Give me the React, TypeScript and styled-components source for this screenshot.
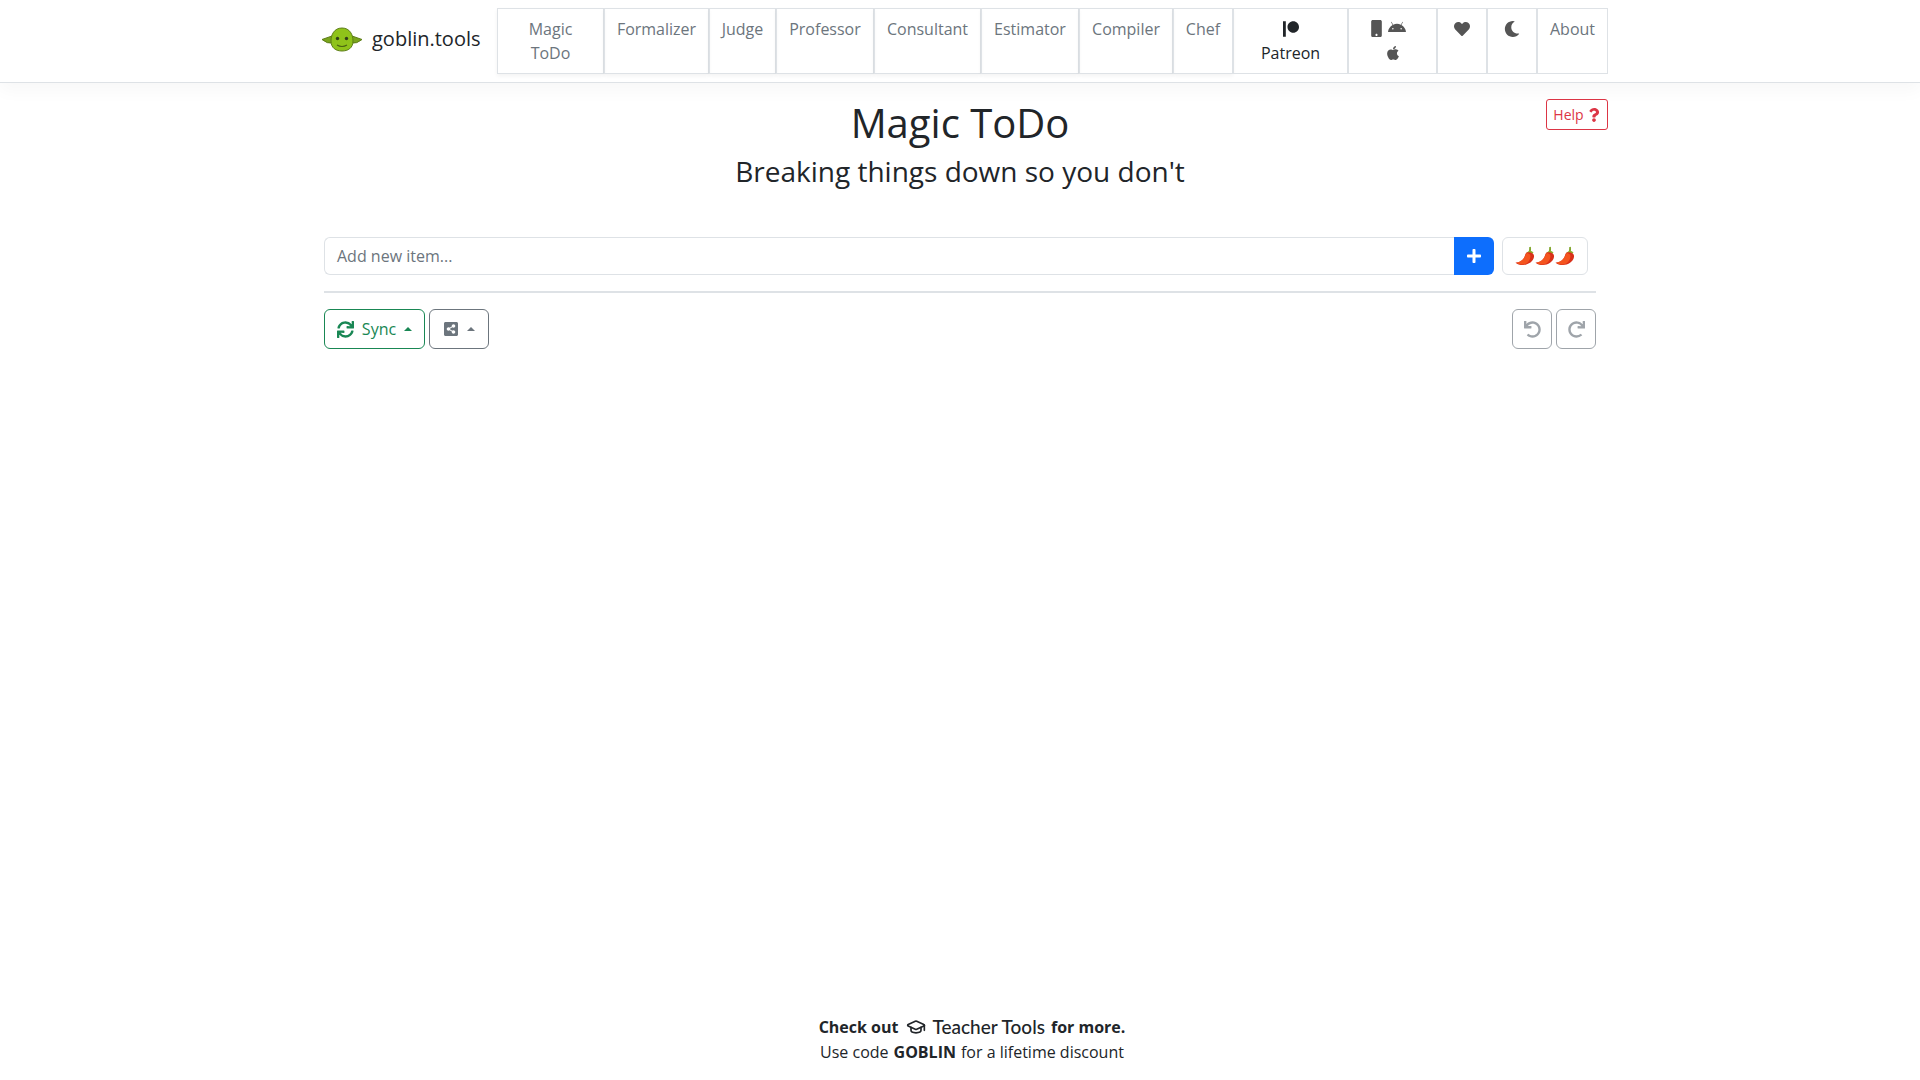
import React from 'react';
import styled, { createGlobalStyle } from 'styled-components';
import {
  FaAndroid,
  FaApple,
  FaHeart,
  FaMobile,
  FaMoon,
  FaPatreon,
  FaPlus,
  FaQuestion,
  FaRedo,
  FaShareAltSquare,
  FaSync,
  FaUndo,
} from 'react-icons/fa';
import { LuGraduationCap } from 'react-icons/lu';

const GlobalStyle = createGlobalStyle`
  html, body {
    margin: 0;
    padding: 0;
    background: #fff;
  }
  body {
    font-family: "Open Sans", "Liberation Sans", sans-serif;
    font-size: 16px;
    line-height: 24px;
    color: #212529;
  }
  * {
    box-sizing: border-box;
  }
`;

const Page = styled.div`
  height: 1080px;
  display: flex;
  flex-direction: column;
  overflow: hidden;
`;

const Navbar = styled.nav`
  height: 83px;
  flex: none;
  border-bottom: 1px solid #dee2e6;
  box-shadow: 0 8px 16px rgba(0, 0, 0, 0.03);
  display: flex;
  justify-content: center;
  padding-top: 8px;
`;

const NavInner = styled.div`
  width: 1296px;
  display: flex;
  justify-content: space-between;
  align-items: flex-start;
`;

const Brand = styled.a`
  display: flex;
  align-items: center;
  gap: 9px;
  height: 62px;
  margin-left: 9px;
  font-size: 20px;
  color: #212529;
`;

const NavList = styled.ul`
  display: flex;
  list-style: none;
  margin: 0;
  padding: 0;
  height: 66px;
`;

const NavItem = styled.li<{ $w: number; $flat?: boolean; $dark?: boolean }>`
  width: ${(p) => p.$w}px;
  border: 1px solid #dee2e6;
  padding: 8px 4px;
  text-align: center;
  color: ${(p) => (p.$dark ? '#212529' : '#6c757d')};
  box-shadow: ${(p) => (p.$flat ? 'none' : '0 2px 4px rgba(0, 0, 0, 0.05)')};
  white-space: nowrap;
  svg {
    vertical-align: -2px;
  }
`;

const DarkIcons = styled.span`
  color: #555;
  svg + svg {
    margin-left: 3px;
    margin-right: 11px;
  }
`;

const Main = styled.main`
  width: 1296px;
  margin: 0 auto;
  flex: 1;
  display: flex;
  flex-direction: column;
`;

const TitleRow = styled.div`
  display: grid;
  grid-template-columns: 1fr auto 1fr;
  padding-top: 16px;
  height: 71px;
  align-items: start;
`;

const Title = styled.h1`
  grid-column: 2;
  margin: 0;
  font-size: 40px;
  line-height: 48px;
  font-weight: 400;
`;

const HelpButton = styled.button`
  grid-column: 3;
  justify-self: end;
  height: 31px;
  width: 62px;
  padding: 0;
  font: inherit;
  font-size: 14px;
  line-height: 21px;
  color: #dc3545;
  background: #fff;
  border: 1px solid #dc3545;
  border-radius: 3px;
  display: flex;
  align-items: center;
  justify-content: center;
  gap: 3px;
`;

const Subtitle = styled.h3`
  margin: 0;
  text-align: center;
  font-size: 28px;
  line-height: 34px;
  font-weight: 400;
`;

const Content = styled.div`
  padding: 0 12px;
`;

const InputRow = styled.div`
  display: flex;
  margin-top: 49px;
  padding-right: 8px;
`;

const TextField = styled.div`
  flex: 1;
  height: 38px;
  border: 1px solid #dee2e6;
  border-right: 0;
  border-radius: 6px 0 0 6px;
  padding: 6px 12px;
  color: #6c757d;
`;

const AddButton = styled.button`
  width: 40px;
  height: 38px;
  border: 0;
  border-radius: 0 6px 6px 0;
  background: #0d6efd;
  color: #fff;
  display: flex;
  align-items: center;
  justify-content: center;
`;

const SpiceButton = styled.button`
  width: 86px;
  height: 38px;
  margin-left: 8px;
  background: #fff;
  border: 1px solid #dee2e6;
  border-radius: 6px;
  display: flex;
  align-items: center;
  justify-content: center;
  padding: 0;
`;

const Rule = styled.hr`
  margin: 16px 0;
  border: 0;
  border-top: 2px solid #dee2e6;
`;

const Toolbar = styled.div`
  display: flex;
  gap: 4px;
`;

const ToolButton = styled.button<{ $color: string; $w: number; $disabled?: boolean }>`
  width: ${(p) => p.$w}px;
  height: 40px;
  padding: 0;
  font: inherit;
  color: ${(p) => p.$color};
  background: #fff;
  border: 1px solid ${(p) => p.$color};
  border-radius: 6px;
  display: flex;
  align-items: center;
  justify-content: center;
  opacity: ${(p) => (p.$disabled ? 0.65 : 1)};
`;

const Spacer = styled.div`
  flex: 1;
`;

const Caret = styled.span`
  width: 0;
  height: 0;
  margin-left: 8px;
  border-left: 4.8px solid transparent;
  border-right: 4.8px solid transparent;
  border-bottom: 4.8px solid currentColor;
`;

const SyncLabel = styled.span`
  margin-left: 8px;
`;

const Footer = styled.footer`
  flex: none;
  height: 66px;
  padding-left: 24px;
  text-align: center;
`;

const FooterLine = styled.div<{ $bold?: boolean }>`
  display: flex;
  align-items: center;
  justify-content: center;
  height: 25px;
  font-weight: ${(p) => (p.$bold ? 700 : 400)};
  b {
    font-weight: 700;
    margin: 0 5px;
  }
`;

const TeacherLink = styled.span`
  display: inline-flex;
  align-items: center;
  gap: 6px;
  margin: 0 6px 0 8px;
  font-family: "Lato", sans-serif;
  font-size: 19px;
  font-weight: 500;
`;

const GoblinLogo = () => (
  <svg width="42" height="28" viewBox="0 0 42 28">
    <path d="M11 11 L1 14.5 Q6 19 12 18 Z" fill="#7aa51c" stroke="#5d7d18" strokeWidth="1" />
    <path d="M31 11 L41 14.5 Q36 19 30 18 Z" fill="#7aa51c" stroke="#5d7d18" strokeWidth="1" />
    <path d="M21 3 C29 3 32 10 32 16 C32 23 27 26 21 26 C15 26 10 23 10 16 C10 10 13 3 21 3 Z" fill="#8fc31a" stroke="#5d7d18" strokeWidth="1" />
    <circle cx="16.5" cy="13.5" r="1.7" fill="#33401a" />
    <circle cx="25.5" cy="13.5" r="1.7" fill="#33401a" />
    <path d="M16 20 Q21 23 26 20" fill="none" stroke="#4a6312" strokeWidth="1.2" />
  </svg>
);

const Chili = () => (
  <svg width="20" height="20" viewBox="0 0 20 20">
    <path d="M14.5 6 Q15.5 3.5 15 1" stroke="#7fa52a" strokeWidth="1.8" fill="none" />
    <path d="M11.5 7 Q15 3 18.5 6.5 L17 8 L13 8 Z" fill="#8bb030" />
    <path d="M11.5 6.5 C15 5.5 19.5 6.5 19 11 C18.3 15.5 13 19 8 19 C5 19 2 18.5 0.5 16.5 C4 16.8 7.5 15 9 12 C10 10 10 8 11.5 6.5 Z" fill="#d9301a" />
    <path d="M11.5 7 C10 10.5 8 15 1.5 16.7 C3 18 6 18.7 8 18.6 C12 18.3 15 15 15.5 10 C15.6 8.5 13.5 7 11.5 7 Z" fill="#f4541e" />
  </svg>
);

const navItems = [
  { label: 'Formalizer', w: 105 },
  { label: 'Judge', w: 67 },
  { label: 'Professor', w: 98 },
  { label: 'Consultant', w: 107 },
  { label: 'Estimator', w: 98 },
  { label: 'Compiler', w: 94 },
];

const App = () => {
  return (
    <Page>
      <GlobalStyle />
      <Navbar>
        <NavInner>
          <Brand>
            <GoblinLogo />
            goblin.tools
          </Brand>
          <NavList>
            <NavItem $w={107}>
              Magic
              <br />
              ToDo
            </NavItem>
            {navItems.map((item) => (
              <NavItem key={item.label} $w={item.w}>
                {item.label}
              </NavItem>
            ))}
            <NavItem $w={60}>Chef</NavItem>
            <NavItem $w={115} $flat $dark>
              <FaPatreon size={16} />
              <br />
              Patreon
            </NavItem>
            <NavItem $w={89} $flat>
              <DarkIcons>
                <FaMobile size={17} />
                <FaAndroid size={18} />
                <br />
                <FaApple size={16} />
              </DarkIcons>
            </NavItem>
            <NavItem $w={50} $flat>
              <DarkIcons>
                <FaHeart size={16} />
              </DarkIcons>
            </NavItem>
            <NavItem $w={50} $flat>
              <DarkIcons>
                <FaMoon size={16} />
              </DarkIcons>
            </NavItem>
            <NavItem $w={71} $flat>
              About
            </NavItem>
          </NavList>
        </NavInner>
      </Navbar>
      <Main>
        <TitleRow>
          <Title>Magic ToDo</Title>
          <HelpButton>
            Help
            <FaQuestion size={14} />
          </HelpButton>
        </TitleRow>
        <Subtitle>Breaking things down so you don't</Subtitle>
        <Content>
          <InputRow>
            <TextField>Add new item...</TextField>
            <AddButton>
              <FaPlus size={16} />
            </AddButton>
            <SpiceButton>
              <Chili />
              <Chili />
              <Chili />
            </SpiceButton>
          </InputRow>
          <Rule />
          <Toolbar>
            <ToolButton $color="#198754" $w={101}>
              <FaSync size={17} />
              <SyncLabel>Sync</SyncLabel>
              <Caret />
            </ToolButton>
            <ToolButton $color="#6c757d" $w={60}>
              <FaShareAltSquare size={16} />
              <Caret />
            </ToolButton>
            <Spacer />
            <ToolButton $color="#6c757d" $w={40} $disabled>
              <FaUndo size={17} />
            </ToolButton>
            <ToolButton $color="#6c757d" $w={40} $disabled>
              <FaRedo size={17} />
            </ToolButton>
          </Toolbar>
        </Content>
      </Main>
      <Footer>
        <FooterLine $bold>
          Check out
          <TeacherLink>
            <LuGraduationCap size={20} />
            Teacher Tools
          </TeacherLink>
          for more.
        </FooterLine>
        <FooterLine>
          Use code<b>GOBLIN</b>for a lifetime discount
        </FooterLine>
      </Footer>
    </Page>
  );
};

export default App;
